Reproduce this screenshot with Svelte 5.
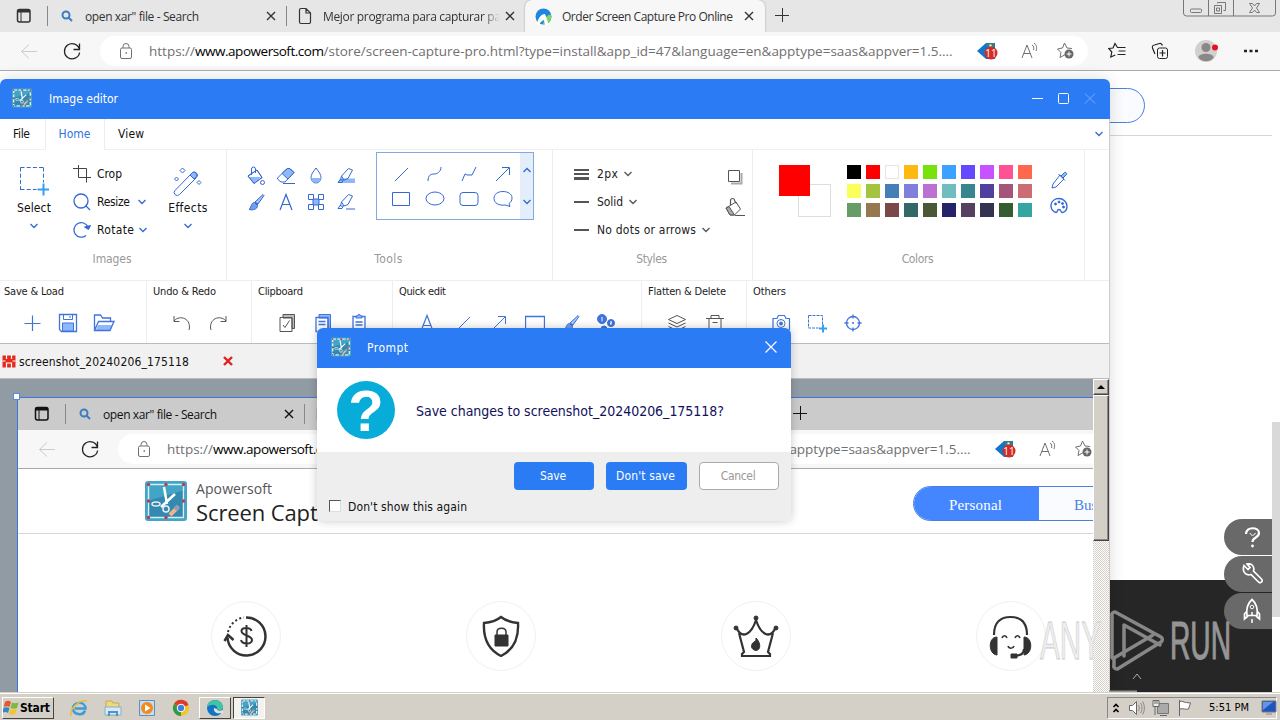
<script>
	// stretches or tightens a label to the width it has in the UI font
	function fit(node, width) {
		const natural = node.getBoundingClientRect().width;
		node.style.letterSpacing = (width - natural) / (node.textContent.length - 1) + 'px';
	}

	const swatches = [
		'#000000', '#ff0000', '#ffffff', '#ffb810', '#77e30c', '#3ba3ff', '#6549ff', '#c653ff', '#ff5294', '#ff674e',
		'#faff5c', '#a3c341', '#4480b5', '#8080dc', '#bb70d2', '#6fbdc0', '#36858f', '#4f419d', '#a55678', '#ca6d74',
		'#679c66', '#967850', '#7a4848', '#336868', '#4c5936', '#27226c', '#56405f', '#333450', '#365c32', '#34a5a1'
	];

	const tools = ['bucket', 'eraser', 'drop', 'marker', 'brush', 'letter', 'mosaic', 'highlight'];
	const shapes = ['line', 'curve', 'polyline', 'arrow', 'rect', 'ellipse', 'round', 'bubble'];

	const lineStyles = [
		{ icon: 'weights', text: '2px', width: 21 },
		{ icon: 'dash', text: 'Solid', width: 26 },
		{ icon: 'dash', text: 'No dots or arrows', width: 99 }
	];

	const quickGroups = [
		{ title: 'Save & Load', tw: 60, w: 147, pad: 14, step: 36, icons: ['plus', 'save', 'folder'] },
		{ title: 'Undo & Redo', tw: 63, w: 105, pad: 17, step: 36, icons: ['undo', 'redo'], grey: true },
		{ title: 'Clipboard', tw: 45, w: 141, pad: 17, step: 36, icons: ['copyCheck', 'copyDoc', 'paste'] },
		{ title: 'Quick edit', tw: 47, w: 249, pad: 16, step: 36, icons: ['letter', 'line', 'arrow', 'bigRect', 'brush', 'numbers'] },
		{ title: 'Flatten & Delete', tw: 78, w: 105, pad: 16, step: 38, icons: ['layers', 'trash'], grey: true },
		{ title: 'Others', tw: 33, w: 200, pad: 16, step: 36, icons: ['camera', 'region', 'target'] }
	];

	const features = ['refund', 'shield', 'crown', 'support'];

	const icons = {
		select: [30, 30, '<path d="M1.5 1.5h23M1.5 1.5v22.500M24.500 1.500v15M1.500 23.500h16" stroke-dasharray="4 2.200"/><path d="M24.500 17.500v12M18.500 23.500h12" stroke="#35a0f0" stroke-width="2"/>'],
		crop: [18, 18, '<path d="M5.500 0v12.500h12.500M0 3.500h13.500v14" stroke="#444"/>'],
		resize: [18, 18, '<circle cx="8" cy="8" r="7" stroke-width="1.300"/><path d="M12.500 12.500l4.500 4.500" stroke-width="1.300"/>'],
		rotate: [18, 18, '<path d="M13 14.500A7.300 7.300 0 1 1 15 6" stroke-width="1.300"/><path d="M11.500 6l4 2.500 2-4z" fill="currentColor"/>'],
		effects: [30, 30, '<path d="M2 24.500L19 7a3 3 0 0 1 4.500 4.500L6.500 28.500a3 3 0 0 1-4.500-4z"/><path d="M17 9l2.500-2.500a3 3 0 0 1 4 4L21 13z" fill="#8fb8f8"/><path d="M9.500 2l2.500 2.500L9.500 7 7 4.500zM3.500 11l2 2-2 2-2-2zM26 14.500l2 2-2 2-2-2z"/>'],
		bucket: [20, 20, '<path d="M2 10l9-6 5 7.500-8 6z" fill="#fff"/><path d="M2.500 11L15 11l-7 6z" fill="#8fb8f8" stroke="none"/><path d="M2 10l9-6 5 7.500-8 6zM5.500 9V3a2 2 0 0 1 4 0v4"/><circle cx="16.500" cy="16.500" r="2"/>'],
		eraser: [20, 20, '<path d="M1.500 12L11 2.500h3l4 4-9 9.500H5L1.500 13z"/><path d="M6 7.500L11.500 2.500h2l4.500 4-6 6.500z" fill="#8fb8f8"/><path d="M7 17.500h12"/>'],
		drop: [20, 20, '<path d="M10 2c3 4 5 6.500 5 9.500a5 5.500 0 0 1-10 0C5 8.500 7 6 10 2z"/><path d="M5.500 12h9a4.500 4.500 0 0 1-9 0z" fill="#8fb8f8" stroke="none"/>'],
		marker: [20, 20, '<path d="M5 12.500h14v4.500H2z" fill="#8fb8f8" stroke="none"/><path d="M5.500 10L12.500 2.500l4 1.500-4.500 8.500-4 1.500zM5.500 10l-1 4 3.500 0M4.500 13L2 16.500h4l1-2"/>'],
		highlight: [20, 20, '<path d="M5.500 10L12.500 2.500l4 1.500-4.500 8.500-4 1.500zM5.500 10l-1 4 3.500 0M4.500 13L2 16.500h4l1-2M10 17h9"/>'],
		brush: [20, 20, '<path d="M9 10l8-7.500 1 1-6 8.500zM9 10l3 3" fill="#a9c6f8"/><path d="M8.500 10.500l3 3c0 4-5 5-8.500 4 2-1 2-7 5.500-7z" fill="#6f9ff0"/>'],
		letter: [20, 20, '<path d="M4 18l6-15.500L16 18M6 12.500h8" stroke-width="1.200"/>'],
		mosaic: [20, 20, '<path d="M7 7h6v6H7z" fill="#8fb8f8"/><path d="M2.500 2.500h5v5h-5zM12.500 2.500h5v5h-5zM2.500 12.500h5v5h-5zM12.500 12.500h5v5h-5z" fill="#fff"/>'],
		line: [20, 20, '<path d="M4 17L17 4"/>'],
		curve: [20, 20, '<path d="M3 17c0-6 3-7 6-7s7-2 7-7"/>'],
		polyline: [20, 20, '<path d="M3 17l3-7 2 1h5l4-8"/>'],
		arrow: [20, 20, '<path d="M3 17L16 4M9 3.500h7.500V11"/>'],
		rect: [20, 20, '<path d="M1.500 4.500h17v13h-17z"/>'],
		ellipse: [20, 20, '<ellipse cx="10" cy="10.500" rx="9" ry="6.500"/>'],
		round: [20, 20, '<rect x="1" y="4.500" width="18" height="13" rx="3"/>'],
		bubble: [20, 20, '<path d="M16 15.500l1 3-4.500-1.500C6 18 1 15 1 10.500S5 3.500 10 3.500s9 2.500 9 6.500c0 2.500-1 4-3 5.500z"/>'],
		weights: [15, 11, '<path d="M0 1h15" stroke-width="2"/><path d="M0 5h15" stroke-width="2"/><path d="M0 9.500h15" stroke-width="3"/>'],
		dash: [15, 11, '<path d="M0 5h15" stroke-width="2"/>'],
		down: [8, 6, '<path d="M.5 1L4 4.500 7.500 1" stroke-width="1.300"/>'],
		up: [8, 6, '<path d="M.5 5L4 1.500 7.500 5" stroke-width="1.300"/>'],
		shadow: [16, 16, '<path d="M4 14.500h10.500V4" stroke="#aaa" stroke-width="2"/><path d="M1.500 1.500h11v11h-11z" fill="#fff"/>'],
		fill: [20, 20, '<path d="M1 11l10-6 4.500 7-6 6H5z"/><path d="M1 11l4 7h4.500L4 9.500z" fill="#aaa"/><path d="M5.500 8V3.500a2 2 0 0 1 4 0l2 3M10 18.500h10" stroke-width="1.200"/>'],
		dropper: [18, 18, '<path d="M10 4l4 4-8 8-4 1 1-4zM8.500 3l6.500 6.500"/><path d="M11 5l3.500-3.500a1.500 1.500 0 0 1 2 2L13 7z" fill="#8fb8f8"/>'],
		palette: [18, 18, '<path d="M6 15.500C2 14 .8 11 1 8c.5-4 4-6.500 8-6.500S17 5 17 9s-2 6-4.500 6.500c-2 .3-1-3-3.500-3s-1 3-3 3z" stroke-width="1.400"/><g fill="currentColor"><circle cx="5.500" cy="7" r="1"/><circle cx="9" cy="5" r="1"/><circle cx="12.500" cy="6.500" r="1"/><circle cx="13.500" cy="10" r="1"/></g>'],
		plus: [20, 20, '<path d="M10.500 2.500v15.500M2.500 10.500h16" stroke-width="1.200"/>'],
		save: [20, 20, '<path d="M1.500 1.500h17v17h-15l-2-2z" stroke-width="1.300"/><path d="M4.500 18v-8h11v8z" fill="#8fb8f8"/><path d="M5.500 1.500v5h9v-5M12 3v2"/>'],
		folder: [22, 20, '<path d="M3 17l2-5h14l-2 5z" fill="#8fb8f8" stroke="none"/><path d="M1.500 17V2h6l2 3h8v3M1.500 17.500l4-9h15.500l-4 9z" stroke-width="1.300"/>'],
		undo: [20, 20, '<path d="M2 8c6-7 18-2 15 9M2 3v5.500h5.500"/>'],
		redo: [20, 20, '<path d="M18 8C12 1 0 6 3 17M18 3v5.500h-5.500"/>'],
		copyCheck: [20, 20, '<path d="M6 1.500h11.500v14H15V5H6z" fill="#bbb" stroke="#555"/><path d="M3 4.500h12v14H3z" stroke="#555"/><path d="M6 12l2 2.500 4.500-7" stroke="#555"/>'],
		copyDoc: [20, 20, '<path d="M6 1.500h11.500v14H15V5H6z" fill="#8fb8f8"/><path d="M3 4.500h12v14H3zM5.500 8.500h7M5.500 11.500h7" stroke-width="1.300"/>'],
		paste: [20, 20, '<path d="M4 3.500h12v15H4zM6.500 9h7M6.500 12h7" stroke-width="1.300"/><path d="M7 5V3h1.500a1.500 1.500 0 0 1 3 0H13v2z" fill="#8fb8f8"/>'],
		bigRect: [20, 20, '<path d="M.5 3.500h19v14H.500z" stroke-width="1.300"/>'],
		numbers: [20, 20, '<circle cx="5" cy="6" r="4.500" fill="currentColor"/><circle cx="14" cy="10" r="3.500" fill="currentColor"/><circle cx="7" cy="16" r="3" fill="currentColor"/><path d="M5 4v4.500M13 9h2l-2 2h2" stroke="#fff"/>'],
		layers: [20, 20, '<path d="M10 2.500l8.500 4-8.500 4-8.500-4zM1.500 10l8.500 4 8.500-4M1.500 13.500l8.500 4 8.500-4"/>'],
		trash: [20, 20, '<path d="M1 5.500h18M6 5V2.500h8V5M4 5.500v13h12v-13M7.500 9.500h5"/>'],
		camera: [20, 20, '<path d="M2 5.500h4l1.500-3h6l1.500 3h3.500v11H2z" stroke-width="1.200"/><circle cx="10" cy="10.500" r="4"/><circle cx="10" cy="10.500" r="1.500" fill="currentColor"/>'],
		region: [20, 20, '<path d="M1.500 2.500h14v10M1.500 2.500v12.500h10" stroke-dasharray="3 1"/><path d="M16 11.500v8M12 15.500h8" stroke="#35a0f0" stroke-width="2"/>'],
		target: [20, 20, '<circle cx="10" cy="10" r="6.500" stroke-width="1.300"/><path d="M10 1.500v4M10 14.500v4M1.500 10h4M14.500 10h4M9 10h2" stroke-width="1.300"/>'],
		workspace: [16, 16, '<rect x="1.500" y="1.500" width="12.500" height="12.500" rx="2" stroke-width="1.500"/><path d="M1.500 3h12.500" stroke-width="3"/><path d="M5 4v10"/>'],
		search: [12, 12, '<circle cx="5" cy="5" r="3.500" stroke-width="2"/><path d="M7.500 7.500l3.500 3.500" stroke-width="2"/>'],
		page: [14, 18, '<path d="M1.500 3a1.500 1.500 0 0 1 1.500-1.500h5l4.500 4.500v9a1.500 1.500 0 0 1-1.500 1.500H3A1.500 1.500 0 0 1 1.500 15zM8 1.500V6h4.500" stroke-width="1.200"/>'],
		close: [12, 12, '<path d="M2 2l8 8M10 2l-8 8" stroke-width="1.400"/>'],
		newTab: [14, 14, '<path d="M7.500 0v14M0 7.500h14"/>'],
		apower: [17, 17, '<circle cx="8.500" cy="8.500" r="8" fill="#1e86df" stroke="none"/><path d="M8 16.500a8 8 0 0 0 8-10c-4 0-7 4-8 10z" fill="#7fd65c" stroke="none"/><path d="M2 16C3 9 7 6 10 6l4 11H10l-1-5c-3 1-4 3-5 5z" fill="#fff" stroke="none"/>'],
		back: [18, 16, '<path d="M17 8.500H1.500M9 1.500L1.500 8.500l7.500 7"/>'],
		reload: [18, 18, '<path d="M16.500 7.500A7.600 7.600 0 1 0 16.600 10.500M16.500 1.500v6h-6" stroke-width="1.300"/>'],
		lock: [14, 18, '<rect x="1.500" y="6" width="11" height="10.500" rx="1.500"/><path d="M4 6V4.500a3 3 0 0 1 6 0V6"/><path d="M6.500 11h1.500" stroke-width="1.500"/>'],
		tag: [22, 20, '<path d="M1 10L10 2h9v16h-9z" fill="#1177c8" stroke="none"/><path d="M11 2h7v4h-7z" fill="#398277" stroke="none"/><path d="M13.500 4.500h2" stroke="#fff" stroke-width="2"/><circle cx="15" cy="12" r="6.500" fill="#d22c27" stroke="none"/><text x="15" y="16" text-anchor="middle" font-family="Open Sans" font-size="10" fill="#fff" stroke="none">11</text>'],
		aloud: [18, 18, '<path d="M1 16L6 3l5 13M2.500 11.500h7M11 3c2 1 2 3 1.500 5M13 1c3 2 3 5 2 8"/>'],
		favAdd: [20, 20, '<path d="M11 15.500l-2.500-1.500L4 16.500l1-5L1.500 8l5-1L8.500 2l2.500 5 5 .5"/><circle cx="13" cy="13" r="4.500" fill="#666" stroke="none"/><path d="M13 10.500v5M10.500 13h5" stroke="#fff"/>'],
		favs: [18, 18, '<path d="M12 5.500H9.500L7 1.500 5 6 .8 6.500l3 3.500-1 5 4.500-2M10.500 9h7M9.500 12.500h8M11 5.500h6.500" stroke-width="1.200"/>'],
		collections: [18, 18, '<rect x="6.500" y="6" width="10" height="10.500" rx="2"/><path d="M11.500 8v6.500M8.500 11h6M4 12L1.500 6c-.5-2 0-2.500 2-3l5-1.500c2-.5 2.500.5 3 2" stroke-width="1.200"/>'],
		avatar: [24, 24, '<circle cx="12" cy="12" r="11" fill="#d1d0ce" stroke="none"/><circle cx="12" cy="8.500" r="4.500" fill="#8a8886" stroke="none"/><path d="M4.500 18.500c0-5 15-5 15 0-3 5-12 5-15 0z" fill="#8a8886" stroke="none"/><circle cx="21" cy="8.500" r="3" fill="#e81123" stroke="none"/>'],
		dots: [16, 4, '<path d="M1 2h3M6.500 2h3M12 2h3" stroke-width="2.500"/>'],
		refund: [46, 46, '<path d="M23 4.500a19 19 0 1 1-18.500 20" stroke-width="2.500"/><path d="M5 19a19 19 0 0 1 16-14.500" stroke-width="2" stroke-dasharray="2 2.500"/><path d="M1.500 28l3.500-6 5.500 5" stroke-width="2.500"/><path d="M28.500 18c-1-4-10-4-10 0 0 5 10.500 4 10.500 9s-10 4.500-11 0M23.500 12v22" stroke-width="2"/>'],
		shield: [46, 46, '<path d="M23 4c5 4 11 5.500 17 6 1 17-5 27-17 33C11 37 5 27 6 10c6-.5 12-2 17-6z" stroke-width="2.400"/><path d="M17 22h13v11H17z" fill="currentColor"/><path d="M19 22v-3c0-5 9-5 9 0v3" stroke-width="1.500"/>'],
		crown: [46, 46, '<path d="M3.500 15c6 12 15 6 19.500-8 4.500 14 13.500 20 19.500 8M6 20l5 19-2 2v2h28v-2l-2-2 5-19" stroke-width="2.200"/><circle cx="3" cy="15" r="2" fill="currentColor"/><circle cx="23" cy="5" r="2" fill="currentColor"/><circle cx="43" cy="15" r="2" fill="currentColor"/><path d="M23 25c5 5 5 12 0 12.500-5-.5-6-6-2-8.500 2-1 2-2 2-4z" fill="currentColor"/>'],
		support: [46, 46, '<path d="M6 22C6 9 13 4 22.500 4S39 9 39 22M36 36c0 6-5 7-11 7" stroke-width="2.200"/><path d="M9 24v18C0 41 0 24 9 24zM36 24v18c9-1 9-18 0-18z" fill="currentColor"/><path d="M23 41h6v4h-6z" fill="currentColor"/><path d="M14 25c1-3 4-3 5 0M27 25c1-3 4-3 5 0M20 33c1 3 5 3 6 0" stroke-width="1.600"/>'],
		help: [22, 22, '<path d="M5 8c0-8 13-7 13-1 0 5-6.500 4-6.500 9" stroke-width="2.200"/><circle cx="11.500" cy="20" r="1.400" fill="currentColor" stroke="none"/><path d="M9 7c1 3 4 3 5.500 0" stroke-width="1"/>'],
		wrench: [22, 22, '<path d="M3 2.500l4 4 2-2-3-3.500c4-1 8 2 6.500 7l8 8c2 2-1 5-3 3L10 11.500C4 13 1 8 3 2.500z" stroke-width="1.700"/>'],
		rocket: [22, 26, '<path d="M11 1.500c4.500 4 6 9 5 16H6C5 10.500 6.500 5.500 11 1.500zM6 13l-2.500 3v5l3.500-3M16 13l2.500 3v5L15 18" stroke-width="1.700"/><circle cx="11" cy="9" r="1.800"/><path d="M11 14v3M11 21v4" stroke-width="1.500"/>'],
		windows: [17, 17, '<path d="M2 3c3-2 4-1 6 0L6.500 8C5 7 3 7 .8 8z" fill="#e8582c" stroke="none"/><path d="M9 3.500c2 1 4 1 6.500 0L14 9c-2 1-4 1-6.500 0z" fill="#7cb93c" stroke="none"/><path d="M.5 9c2-1 4-1 6 0L5 14c-2-1.500-4-1-6 0z" fill="#3487c8" stroke="none"/><path d="M7.300 10c2 1 4 1 6.500 0l-1.500 5c-2 1-4 1-6.500 0z" fill="#f4c430" stroke="none"/>'],
		ie: [18, 18, '<path d="M15 11.500c-2 6-12 4-12-2 0-7 12-8 12.500 0H5" stroke="#3a9cd9" stroke-width="2.500"/><path d="M1 17C-1 10 10 0 17 2" stroke="#e9bd3a" stroke-width="1.500"/>'],
		explorer: [18, 18, '<path d="M2 2h6l1 2h6v12H2z" fill="#f2d680" stroke="#c9a84c"/><path d="M1 8h16v8H1z" fill="#d6e9f5" stroke="#7fb2d4"/><path d="M5 17v-4h8v4" stroke="#4f95c7" stroke-width="2"/>'],
		player: [18, 18, '<path d="M1.500 1.500h15v15h-15z" fill="#c5dcf1" stroke="#5e8fbd"/><circle cx="9" cy="9" r="6" fill="#f28a1c" stroke="none"/><path d="M7 5.500l5.500 3.500L7 12.500z" fill="#fff" stroke="none"/>'],
		chrome: [18, 18, '<circle cx="9" cy="9" r="8" fill="#f3c527" stroke="none"/><path d="M9 9L2 5A8 8 0 0 1 16.500 6z" fill="#df3b2c" stroke="none"/><path d="M9 9l0 8A8 8 0 0 1 2 5z" fill="#309a4c" stroke="none"/><circle cx="9" cy="9" r="3.800" fill="#3f7de0" stroke="#fff"/>'],
		edge: [18, 18, '<circle cx="9" cy="9" r="8" fill="#1573c4" stroke="none"/><path d="M1 8C2-1 16-1 17 8c0 4-5 4-6 2 1-4-5-6-10-2z" fill="#41c6a4" stroke="none"/><path d="M8 9c-1 4 3 6 7 5l2 1V11c-3 1-6 1-6-1z" fill="#e0e0dc" stroke="none"/>'],
		trayUp: [8, 12, '<path d="M1.500 5L4 2.500 6.500 5M1.500 10L4 7.500 6.500 10" stroke="#000" stroke-width="1.600"/>'],
		volume: [18, 18, '<path d="M1.500 6.500h3l4-4v13l-4-4h-3z" fill="#fff" stroke="#666"/><path d="M10.500 6c1 2 1 4 0 6M12.500 4c2 3 2 7 0 10M14.500 2.500c2.500 4 2.500 9 0 13" stroke="#888"/>'],
		network: [18, 18, '<path d="M5.500 4.500h11v10h-11z" fill="#aaa" stroke="#777"/><path d="M1 1.500h6v6H1zM3 8v8M8 16.500h7M3 1v4M5 1v4" fill="#eee" stroke="#666"/>'],
		flag: [18, 18, '<path d="M3.500 1v16M3.500 2.500c3-1 4 1 7 1l4 .5-2 6c-3 1-5-1-9 0z" fill="#fff" stroke="#666"/>'],
		monitor: [16, 15, '<path d="M1 1h14v11H1z" fill="#1c55c0" stroke="#777"/><path d="M2 2h10L2 10z" fill="#5f96e6" stroke="none"/><path d="M5 14h6" stroke="#888"/>'],
		diskRed: [14, 14, '<path d="M.5 1.500h13v12H.500z" fill="#e5291e" stroke="none"/><path d="M4.500 1v4M9.500 1v4M4.500 14V9h5v5M.5 7h3M10.500 7h3" stroke="#fff" stroke-width="1.200"/>']
	};
</script>

{#snippet icon(name)}
	{@const [w, h, body] = icons[name]}
	<svg class="icon" width={w} height={h} viewBox="0 0 {w} {h}" fill="none" stroke="currentColor">{@html body}</svg>
{/snippet}

{#snippet logo(size)}
	<svg class="icon" width={size} height={size} viewBox="0 0 42 42" fill="none">
		<rect x="0" y="1" width="42" height="40" rx="3" fill="#43a5c6" />
		<path d="M2 21L40 10v28H3z" fill="#3389b0" />
		<rect x="3.500" y="4.500" width="35" height="33" stroke="#d7eef5" stroke-width={size < 30 ? 3 : 1.5} stroke-dasharray={size < 30 ? '7 3' : 'none'} />
		<path d="M19 7l3 17M30 14L16 27" stroke="#fff" stroke-width="2.500" />
		<ellipse cx="11" cy="24" rx="4" ry="2" stroke="#e6f3f8" stroke-width="1.500" />
		<circle cx="21" cy="29" r="3" stroke="#e6f3f8" stroke-width="1.500" />
		<path d="M25 35l8-8" stroke="#efb48e" stroke-width="4" />
		<path d="M30 29.500l3.500-3.500" stroke="#9a9db0" stroke-width="4.500" />
		{#each [[3.500, 4.500], [21, 4.500], [38.500, 4.500], [3.500, 21], [38.500, 21], [3.500, 37.500], [21, 37.500]] as [x, y]}
			<circle cx={x} cy={y} r="1.700" fill="#b5404a" />
		{/each}
	</svg>
{/snippet}

{#snippet browser(dimmed)}
	<div class="browser" class:dimmed>
		<div class="tabs">
			<div class="workspace">{@render icon('workspace')}</div>
			<div class="tab first">
				<span class="search">{@render icon('search')}</span>
				<div class="tab-text"><span use:fit={114}>open xar" file - Search</span></div>
				{@render icon('close')}
			</div>
			<div class="tab second">
				{@render icon('page')}
				<div class="tab-text faded"><span use:fit={185}>Mejor programa para capturar pan</span></div>
				{@render icon('close')}
			</div>
			<div class="tab active">
				{@render icon('apower')}
				<div class="tab-text"><span use:fit={171}>Order Screen Capture Pro Online</span></div>
				{@render icon('close')}
			</div>
			<div class="new-tab">{@render icon('newTab')}</div>
			{#if !dimmed}
				<div class="win-buttons">
					<svg width="93" height="17" viewBox="0 0 93 17" fill="none" stroke="#777">
						<path d="M.5 0v13a3 3 0 0 0 3 3h86a3 3 0 0 0 3-3V0M25.500 0v16M50.500 0v16" />
						<rect x="7.500" y="9" width="11" height="3.500" rx="1" />
						<path d="M34.500 3.500v-1h8v8h-2M31.500 5.500h7v8h-7zM33.500 8h3v3h-3z" />
						<path d="M66.500 3.500h3l2 2.500 2-2.500h3l-3 4.500 3 4.500h-3l-2-2.500-2 2.500h-3l3-4.500z" />
					</svg>
				</div>
			{/if}
		</div>
		<div class="toolbar">
			<span class="back">{@render icon('back')}</span>
			{@render icon('reload')}
			<div class="address">
				{@render icon('lock')}
				<div class="url"><span use:fit={46}>https://</span><b use:fit={129}>www.apowersoft.com</b><span use:fit={629}>/store/screen-capture-pro.html?type=install&amp;app_id=47&amp;language=en&amp;apptype=saas&amp;appver=1.5....</span></div>
				<span class="tag">{@render icon('tag')}</span>
				<span class="aloud">{@render icon('aloud')}</span>
				{@render icon('favAdd')}
			</div>
			<div class="actions">
				{@render icon('favs')}
				{@render icon('collections')}
				{@render icon('avatar')}
				{@render icon('dots')}
			</div>
		</div>
		<div class="site">
			<header>
				{@render logo(42)}
				<div class="brand">
					<small><span use:fit={76}>Apowersoft</span></small>
					<strong><span use:fit={197}>Screen Capture Pro</span></strong>
				</div>
				<div class="switch">
					<div class="on"><span use:fit={53}>Personal</span></div>
					<div><span use:fit={53}>Business</span></div>
				</div>
			</header>
			<div class="features">
				{#each features as name}
					<div class="feature">{@render icon(name)}</div>
				{/each}
			</div>
			{#if !dimmed}
				<footer></footer>
			{/if}
		</div>
	</div>
{/snippet}

<div class="screen">
	{@render browser(false)}
	<div class="page-scroll"></div>
	<div class="side">
		{#each ['help', 'wrench', 'rocket'] as name}
			<div>{@render icon(name)}</div>
		{/each}
	</div>

	<div class="editor">
		<div class="title">
			{@render logo(20)}
			<span use:fit={69}>Image editor</span>
			<svg width="64" height="14" viewBox="0 0 64 14" fill="none" stroke="#fff">
				<path d="M0 7.500h11" />
				<rect x="26.500" y="2.500" width="10" height="10" rx="1" />
				<path d="M53 2.500l10 10M63 2.500l-10 10" stroke="#78aaf9" />
			</svg>
		</div>
		<div class="menu">
			<div class="item file"><span use:fit={17}>File</span></div>
			<div class="item home"><span use:fit={32}>Home</span></div>
			<div class="item view"><span use:fit={26}>View</span></div>
			<div class="collapse">{@render icon('down')}</div>
		</div>

		<div class="ribbon">
			<section class="images">
				<div class="content">
					<div class="big">
						{@render icon('select')}
						<span use:fit={34}>Select</span>
						<i>{@render icon('down')}</i>
					</div>
					<div class="rows">
						<div>{@render icon('crop')}<span use:fit={25}>Crop</span></div>
						<div>{@render icon('resize')}<span use:fit={33}>Resize</span>{@render icon('down')}</div>
						<div>{@render icon('rotate')}<span class="wide" use:fit={37}>Rotate</span>{@render icon('down')}</div>
					</div>
					<div class="big">
						{@render icon('effects')}
						<span use:fit={39}>Effects</span>
						<i>{@render icon('down')}</i>
					</div>
				</div>
				<h4><span use:fit={39}>Images</span></h4>
			</section>
			<section class="tools">
				<div class="content">
					<div class="tool-grid">
						{#each tools as name}
							<div>{@render icon(name)}</div>
						{/each}
					</div>
					<div class="shape-box">
						<div class="shape-grid">
							{#each shapes as name}
								<div>{@render icon(name)}</div>
							{/each}
						</div>
						<div class="shape-scroll">{@render icon('up')}{@render icon('down')}</div>
					</div>
				</div>
				<h4><span use:fit={28}>Tools</span></h4>
			</section>
			<section class="styles">
				<div class="content">
					<div class="line-styles">
						{#each lineStyles as style}
							<div>{@render icon(style.icon)}<span use:fit={style.width}>{style.text}</span>{@render icon('down')}</div>
						{/each}
					</div>
					<div class="fills">
						{@render icon('shadow')}
						{@render icon('fill')}
					</div>
				</div>
				<h4><span use:fit={31}>Styles</span></h4>
			</section>
			<section class="colors">
				<div class="content">
					<div class="current">
						<div class="bg"></div>
						<div class="fg"></div>
					</div>
					<div class="swatches">
						{#each swatches as color}
							<div class:white={color == '#ffffff'} style="background: {color}"></div>
						{/each}
					</div>
					<div class="pickers">
						{@render icon('dropper')}
						{@render icon('palette')}
					</div>
				</div>
				<h4><span use:fit={32}>Colors</span></h4>
			</section>
		</div>

		<div class="quick">
			{#each quickGroups as group}
				<div class="group" class:grey={group.grey} style="width: {group.w}px">
					<h5><span use:fit={group.tw}>{group.title}</span></h5>
					<div class="quick-icons" style="padding-left: {group.pad}px">
						{#each group.icons as name}
							<div style="width: {group.step}px">{@render icon(name)}</div>
						{/each}
					</div>
				</div>
			{/each}
		</div>

		<div class="file-tabs">
			{@render icon('diskRed')}
			<span use:fit={170}>screenshot_20240206_175118</span>
			<b>{@render icon('close')}</b>
		</div>

		<div class="work">
			<div class="canvas">
				<div class="picture">
					{@render browser(true)}
				</div>
				<div class="handle"></div>
			</div>
			<div class="scrollbar">
				<div class="arrow"></div>
				<div class="thumb"></div>
			</div>
		</div>
	</div>

	<div class="dialog">
		<div class="title">
			{@render logo(20)}
			<span use:fit={41}>Prompt</span>
			<svg width="12" height="12" viewBox="0 0 12 12" fill="none" stroke="#fff"><path d="M.5.5l11 11M11.500.5l-11 11" stroke-width="1.200" /></svg>
		</div>
		<div class="message">
			<div class="question">?</div>
			<span use:fit={308}>Save changes to screenshot_20240206_175118?</span>
		</div>
		<div class="answer">
			<div class="buttons">
				<button><span use:fit={26}>Save</span></button>
				<button class="mid"><span use:fit={59}>Don't save</span></button>
				<button class="plain"><span use:fit={35}>Cancel</span></button>
			</div>
			<label><i></i><span use:fit={119}>Don't show this again</span></label>
		</div>
	</div>

	<div class="taskbar">
		<div class="start">{@render icon('windows')}<span use:fit={30}>Start</span></div>
		<div class="task">{@render icon('ie')}</div>
		<div class="task">{@render icon('explorer')}</div>
		<div class="task">{@render icon('player')}</div>
		<div class="task">{@render icon('chrome')}</div>
		<div class="task raised">{@render icon('edge')}</div>
		<div class="task pressed">{@render logo(17)}</div>
		<div class="tray">
			{@render icon('trayUp')}
			{@render icon('volume')}
			{@render icon('network')}
			{@render icon('flag')}
			<span use:fit={40}>5:51 PM</span>
			{@render icon('monitor')}
		</div>
	</div>

	<svg class="watermark" width="196" height="84" viewBox="0 0 196 84" fill="none">
		<text x="3" y="51" textLength="61" lengthAdjust="spacingAndGlyphs" class="any">ANY</text>
		<text x="133" y="51" textLength="61" lengthAdjust="spacingAndGlyphs" class="run">RUN</text>
		<path d="M75 50V8a3 3 0 0 1 5-3l44 24a3 3 0 0 1 0 5L82 60a3 3 0 0 1-5-3V50l39-23M87 48V17l36 20" stroke="#999" stroke-width="3.500" stroke-linejoin="round" stroke-linecap="round" opacity=".85" />
		<path d="M96 71l4-5 4 5" stroke="#aaa" />
		<path d="M72 83.500h28" stroke="#999" stroke-width="2" />
	</svg>
</div>

<style>
	.screen {
		position: relative;
		width: 1280px;
		height: 720px;
		overflow: hidden;
		background: #fff;
		font-family: "DejaVu Sans Condensed", "Noto Sans", sans-serif;
		font-size: 12px;
		color: #111;
		white-space: nowrap;
	}

	.icon {
		display: block;
		flex: none;
	}

	span {
		flex: none;
	}

	/* browser */

	.browser {
		width: 1280px;
		height: 692px;
		font-family: "Open Sans", "Noto Sans", sans-serif;
		display: flex;
		flex-direction: column;
	}

	.tabs {
		display: flex;
		height: 32px;
		flex: none;
		background: #e6e6e6;
		color: #333;
	}

	.dimmed .tabs {
		background: #cbcbcb;
		color: #111;
	}

	.workspace {
		width: 47px;
		padding: 8px 0 0 16px;
		box-sizing: border-box;
	}

	.tab {
		display: flex;
		align-items: center;
		box-sizing: border-box;
		background: linear-gradient(#888, #888) 0 6px / 1px 20px no-repeat;
	}

	.first {
		width: 239px;
		padding-left: 14px;
	}

	.second {
		width: 239px;
		padding-left: 12px;
	}

	.active {
		width: 240px;
		padding-left: 10px;
		background: #f7f7f7;
		border-radius: 7px 7px 0 0;
		box-shadow: 0 0 2px #999;
		clip-path: inset(0 -3px);
	}

	.dimmed .active {
		background: #f7f7f7;
	}

	.search {
		color: #3b7cc4;
	}

	.tab-text {
		width: 181px;
		margin-left: 11px;
		overflow: hidden;
		flex: none;
	}

	.first .tab-text {
		margin-left: 12px;
		width: 180px;
	}

	.second .tab-text {
		width: 177px;
		margin-right: 4px;
	}

	.active .tab-text {
		margin-left: 10px;
	}

	.faded {
		mask-image: linear-gradient(90deg, #000 160px, transparent 177px);
	}

	.new-tab {
		padding: 8px 0 0 10px;
	}

	.win-buttons {
		margin-left: auto;
		margin-right: 4px;
	}

	.toolbar {
		display: flex;
		align-items: center;
		height: 38px;
		flex: none;
		padding-left: 20px;
		background: #f7f7f7;
		border-bottom: 1px solid #aaa;
		color: #222;
	}

	.back {
		color: #ccc;
		margin-right: 25px;
	}

	.address {
		display: flex;
		align-items: center;
		width: 988px;
		height: 30px;
		box-sizing: border-box;
		margin-left: 19px;
		padding-left: 19px;
		border-radius: 15px;
		background: #fff;
		color: #707070;
		font-size: 13.5px;
	}

	.url {
		display: flex;
		width: 828px;
		margin-left: 16px;
		flex: none;
	}

	.url b {
		font-weight: normal;
		color: #000;
	}

	.tag {
		margin-right: 24px;
		margin-left: -1px;
	}

	.aloud {
		margin-right: 17px;
		margin-left: -1px;
	}

	.actions {
		display: flex;
		align-items: center;
		gap: 25px;
		margin-left: 20px;
	}

	.site {
		flex: 1;
		display: flex;
		flex-direction: column;
		background: #fff;
	}

	.site header {
		display: flex;
		align-items: center;
		height: 64px;
		flex: none;
		padding-left: 127px;
		width: 1145px;
		border-bottom: 1px solid #d6d6d6;
	}

	.brand {
		display: flex;
		flex-direction: column;
		width: 717px;
		margin-left: 9px;
		padding-top: 3px;
		color: #222;
	}

	.brand small {
		font-size: 14px;
		line-height: 20px;
		color: #555;
	}

	.brand strong {
		font-weight: normal;
		font-size: 22px;
		line-height: 27px;
	}

	.switch {
		display: flex;
		width: 248px;
		height: 33px;
		flex: none;
		margin-top: 4px;
		border: 1px solid #4a7fe0;
		border-radius: 18px;
		overflow: hidden;
		font: 15px/36px "Liberation Serif", serif;
		color: #4a80e8;
		background: #fafbff;
	}

	.switch div {
		width: 123px;
		text-align: center;
	}

	.switch .on {
		width: 125px;
		text-indent: -2px;
		background: #4486ff;
		color: #fff;
	}

	.features {
		display: flex;
		gap: 185px;
		padding: 67px 0 0 193px;
		color: #333;
	}

	.feature {
		width: 68px;
		height: 68px;
		display: flex;
		flex: none;
		align-items: center;
		justify-content: center;
		border: 1px solid #f0f0f0;
		border-radius: 50%;
	}

	.site footer {
		margin-top: auto;
		width: 1272px;
		height: 112px;
		background: #262626;
	}

	.page-scroll {
		position: absolute;
		left: 1272px;
		top: 422px;
		width: 8px;
		height: 195px;
		background: #d9d9d9;
	}

	.side {
		position: absolute;
		left: 1224px;
		top: 519px;
		display: flex;
		flex-direction: column;
		gap: 1px;
		color: #fff;
	}

	.side div {
		display: flex;
		align-items: center;
		padding-left: 17px;
		width: 31px;
		height: 36px;
		border-radius: 18px 0 0 18px;
		background: #696969;
	}

	/* image editor window */

	.editor {
		position: absolute;
		left: 0;
		top: 79px;
		width: 1109px;
		height: 613px;
		display: flex;
		flex-direction: column;
		background: #fff;
		border-right: 1px solid #ccc;
		border-radius: 6px 6px 0 0;
		box-shadow: 0 0 16px rgba(0, 0, 0, .14);
	}

	.title {
		display: flex;
		align-items: center;
		height: 40px;
		flex: none;
		box-sizing: border-box;
		background: #2a7bf4;
		color: #fff;
		border-radius: 6px 6px 0 0;
	}

	.editor .title {
		width: 1110px;
		padding: 0 14px 2px 12px;
	}

	.title span {
		margin-left: 17px;
		padding-top: 1px;
	}

	.title svg:last-child {
		margin-left: auto;
	}

	.menu {
		display: flex;
		height: 30px;
		flex: none;
		border-bottom: 1px solid #f0f0f0;
	}

	.item {
		display: flex;
		align-items: center;
		padding-bottom: 1px;
	}

	.file {
		width: 32px;
		padding-left: 13px;
	}

	.home {
		justify-content: center;
		width: 57px;
		height: 30px;
		padding-right: 1px;
		background: #fff;
		color: #2f74dc;
		border: solid #eee;
		border-width: 0 1px;
	}

	.view {
		padding-left: 13px;
	}

	.collapse {
		margin-left: auto;
		padding: 12px 6px 0 0;
		color: #3468d4;
	}

	.ribbon {
		display: flex;
		height: 130px;
		flex: none;
		border-bottom: 1px solid #eee;
	}

	section {
		display: flex;
		flex-direction: column;
		box-sizing: border-box;
		border-right: 1px solid #eee;
		color: #111;
	}

	.images {
		width: 227px;
	}

	.tools {
		width: 326px;
	}

	.styles {
		width: 200px;
	}

	.colors {
		width: 332px;
	}

	.content {
		display: flex;
		height: 100px;
		color: #3468d4;
	}

	h4 {
		margin: 0;
		padding-right: 2px;
		font-weight: normal;
		line-height: 19px;
		color: #999;
		text-align: center;
	}

	.big {
		display: flex;
		flex-direction: column;
		align-items: center;
		width: 68px;
		padding-top: 16px;
	}

	.rows + .big {
		width: 60px;
	}

	.big span {
		line-height: 24px;
		color: #111;
	}

	.big i {
		margin-top: 3px;
	}

	.rows {
		width: 85px;
		padding: 10px 0 0 5px;
	}

	.rows div, .line-styles div {
		display: flex;
		align-items: center;
		height: 28px;
	}

	.rows span {
		margin: 0 8px 0 6px;
		color: #111;
	}

	.rows .wide {
		margin-right: 5px;
	}

	.tool-grid {
		display: grid;
		grid-template-columns: repeat(4, 30px);
		grid-auto-rows: 26px;
		margin: 13px 15px 0 14px;
	}

	.tool-grid div, .shape-grid div {
		display: flex;
		align-items: center;
		justify-content: center;
	}

	.shape-box {
		display: flex;
		width: 156px;
		height: 66px;
		margin-top: 2px;
		border: 1px solid #82aade;
	}

	.shape-grid {
		display: grid;
		grid-template-columns: repeat(4, 34px);
		grid-auto-rows: 24px;
		width: 143px;
		padding: 9px 0 0 7px;
		box-sizing: border-box;
	}

	.shape-scroll {
		display: flex;
		flex-direction: column;
		justify-content: space-between;
		align-items: center;
		width: 13px;
		padding: 14px 0;
		background: #e4eefb;
	}

	.line-styles {
		width: 172px;
		padding: 10px 0 0 21px;
		box-sizing: border-box;
		color: #555;
	}

	.line-styles span {
		margin: 0 6px 0 8px;
		color: #222;
	}

	.fills {
		display: flex;
		flex-direction: column;
		align-items: center;
		gap: 12px;
		padding-top: 19px;
		color: #555;
	}

	.current {
		position: relative;
		width: 52px;
		height: 52px;
		margin: 15px 16px 0 26px;
	}

	.fg {
		position: absolute;
		left: 0;
		top: 0;
		width: 31px;
		height: 31px;
		background: #f00;
	}

	.bg {
		position: absolute;
		left: 19px;
		top: 19px;
		width: 31px;
		height: 31px;
		border: 1px solid #ddd;
	}

	.swatches {
		display: grid;
		grid-template-columns: repeat(10, 14px);
		grid-auto-rows: 14px;
		gap: 5px;
		margin-top: 15px;
	}

	.white {
		box-shadow: inset 0 0 0 1px #e5e5e5;
	}

	.pickers {
		display: flex;
		flex-direction: column;
		gap: 8px;
		padding: 21px 0 0 18px;
	}

	.quick {
		display: flex;
		height: 62px;
		flex: none;
		border-bottom: 1px solid #bbb;
	}

	.group {
		box-sizing: border-box;
		border-right: 1px solid #eee;
		color: #3f73dd;
	}

	.group:last-child {
		border: 0;
	}

	.grey {
		color: #555;
	}

	h5 {
		margin: 0;
		padding-left: 4px;
		font-size: 11px;
		font-weight: normal;
		line-height: 21px;
		color: #222;
	}

	.group + .group h5 {
		padding-left: 6px;
	}

	.quick-icons {
		display: flex;
		padding-top: 11px;
	}

	.quick-icons div {
		display: flex;
		justify-content: center;
	}

	.file-tabs {
		display: flex;
		align-items: center;
		height: 34px;
		flex: none;
		padding-left: 2px;
		background: #f1f1f1;
		border-bottom: 1px solid #bbb;
	}

	.file-tabs span {
		margin: 0 33px 0 3px;
		padding-top: 1px;
	}

	.file-tabs b {
		color: #e32020;
	}

	.file-tabs b :global(path) {
		stroke-width: 2.4;
	}

	.work {
		display: flex;
		flex: 1;
		min-height: 0;
	}

	.canvas {
		position: relative;
		display: flex;
		width: 1093px;
		padding: 18px 0 0 17px;
		box-sizing: border-box;
		overflow: hidden;
		background: #919ba4;
	}

	.picture {
		flex: 1;
		overflow: hidden;
		border: solid #3f74e0;
		border-width: 1px 0 0 1px;
	}

	.handle {
		position: absolute;
		left: 13px;
		top: 14px;
		width: 5px;
		height: 5px;
		background: #fff;
		border: 1px solid #5c88dd;
	}

	.scrollbar {
		width: 16px;
		background: repeating-conic-gradient(#fff 0 25%, #d4d0c8 0 50%) 0 0 / 2px 2px;
	}

	.arrow {
		display: flex;
		align-items: center;
		justify-content: center;
	}

	.arrow::before {
		content: "";
		border: 4px solid transparent;
		border-bottom-color: #000;
		border-top: 0;
	}

	.arrow, .thumb {
		box-sizing: border-box;
		height: 16px;
		background: #d4d0c8;
		border: 1px solid #fff;
		border-right-color: #444;
		border-bottom-color: #444;
		box-shadow: inset -1px -1px #888;
	}

	.thumb {
		height: 146px;
	}

	/* prompt */

	.dialog {
		position: absolute;
		left: 317px;
		top: 328px;
		width: 474px;
		height: 193px;
		background: #fff;
		border-radius: 6px;
		box-shadow: 0 0 10px rgba(0, 0, 0, .22);
	}

	.dialog .title {
		padding: 0 14px 2px 14px;
	}

	.dialog .title span {
		margin-left: 16px;
	}

	.message {
		display: flex;
		align-items: center;
		height: 84px;
		padding-left: 20px;
		font-size: 14px;
		color: #11115c;
	}

	.message span {
		padding-top: 1px;
	}

	.question {
		width: 58px;
		height: 58px;
		margin-right: 21px;
		border-radius: 50%;
		background: #08acd9;
		color: #fff;
		font: bold 58px/60px "Liberation Sans", sans-serif;
		text-align: center;
	}

	.answer {
		height: 69px;
		box-sizing: border-box;
		padding: 10px 12px 0;
		background: #eee;
		border-radius: 0 0 6px 6px;
	}

	.buttons {
		display: flex;
		justify-content: flex-end;
		gap: 12px;
	}

	button {
		width: 80px;
		height: 28px;
		padding: 0 2px 0 0;
		border: 0;
		border-radius: 4px;
		background: #2a7bf4;
		color: #fff;
		font: inherit;
	}

	button.mid {
		width: 81px;
	}

	button.plain {
		background: #fff;
		border: 1px solid #aaa;
		color: #999;
	}

	label {
		display: flex;
		align-items: center;
		gap: 7px;
		margin-top: 10px;
	}

	label i {
		width: 10px;
		height: 10px;
		margin-top: -3px;
		background: #fff;
		border: 1px solid #555;
		border-right-color: #ddd;
		border-bottom-color: #ddd;
	}

	/* taskbar */

	.taskbar {
		position: absolute;
		left: 0;
		top: 692px;
		width: 1280px;
		height: 28px;
		display: flex;
		align-items: center;
		box-sizing: border-box;
		padding: 2px 3px 0 2px;
		background: #d4d0c8;
		border-top: 1px solid #d4d0c8;
		box-shadow: inset 0 1px #fff;
	}

	.start {
		display: flex;
		align-items: center;
		width: 52px;
		height: 22px;
		box-sizing: border-box;
		margin-right: 9px;
		border: 1px solid #fff;
		border-right-color: #444;
		border-bottom-color: #444;
		font-weight: bold;
		color: #000;
	}

	.task {
		display: flex;
		align-items: center;
		justify-content: center;
		width: 32px;
		height: 22px;
		box-sizing: border-box;
		margin-right: 2px;
	}

	.raised {
		border: 1px solid #fff;
		border-right-color: #444;
		border-bottom-color: #444;
	}

	.pressed {
		background: #f4f2ef;
		border: 1px solid #444;
		border-right-color: #fff;
		border-bottom-color: #fff;
	}

	.tray {
		display: flex;
		align-items: center;
		width: 170px;
		height: 22px;
		box-sizing: border-box;
		margin-left: auto;
		padding-left: 4px;
		border: 1px solid #888;
		border-right-color: #fff;
		border-bottom-color: #fff;
		color: #333;
	}

	.tray .icon + .icon {
		margin-left: 8px;
	}

	.tray .icon + .icon + .icon {
		margin-left: 6px;
	}

	.tray span {
		margin: 0 12px 0 15px;
		font-size: 11px;
		color: #000;
	}

	.watermark {
		position: absolute;
		left: 1037px;
		top: 608px;
	}

	.any, .run {
		font: 53px "Liberation Sans", sans-serif;
		fill: #eee;
		stroke: #ccc;
		stroke-width: .8px;
	}

	.run {
		fill: #959595;
		stroke: #959595;
		stroke-width: 1.2px;
	}
</style>
